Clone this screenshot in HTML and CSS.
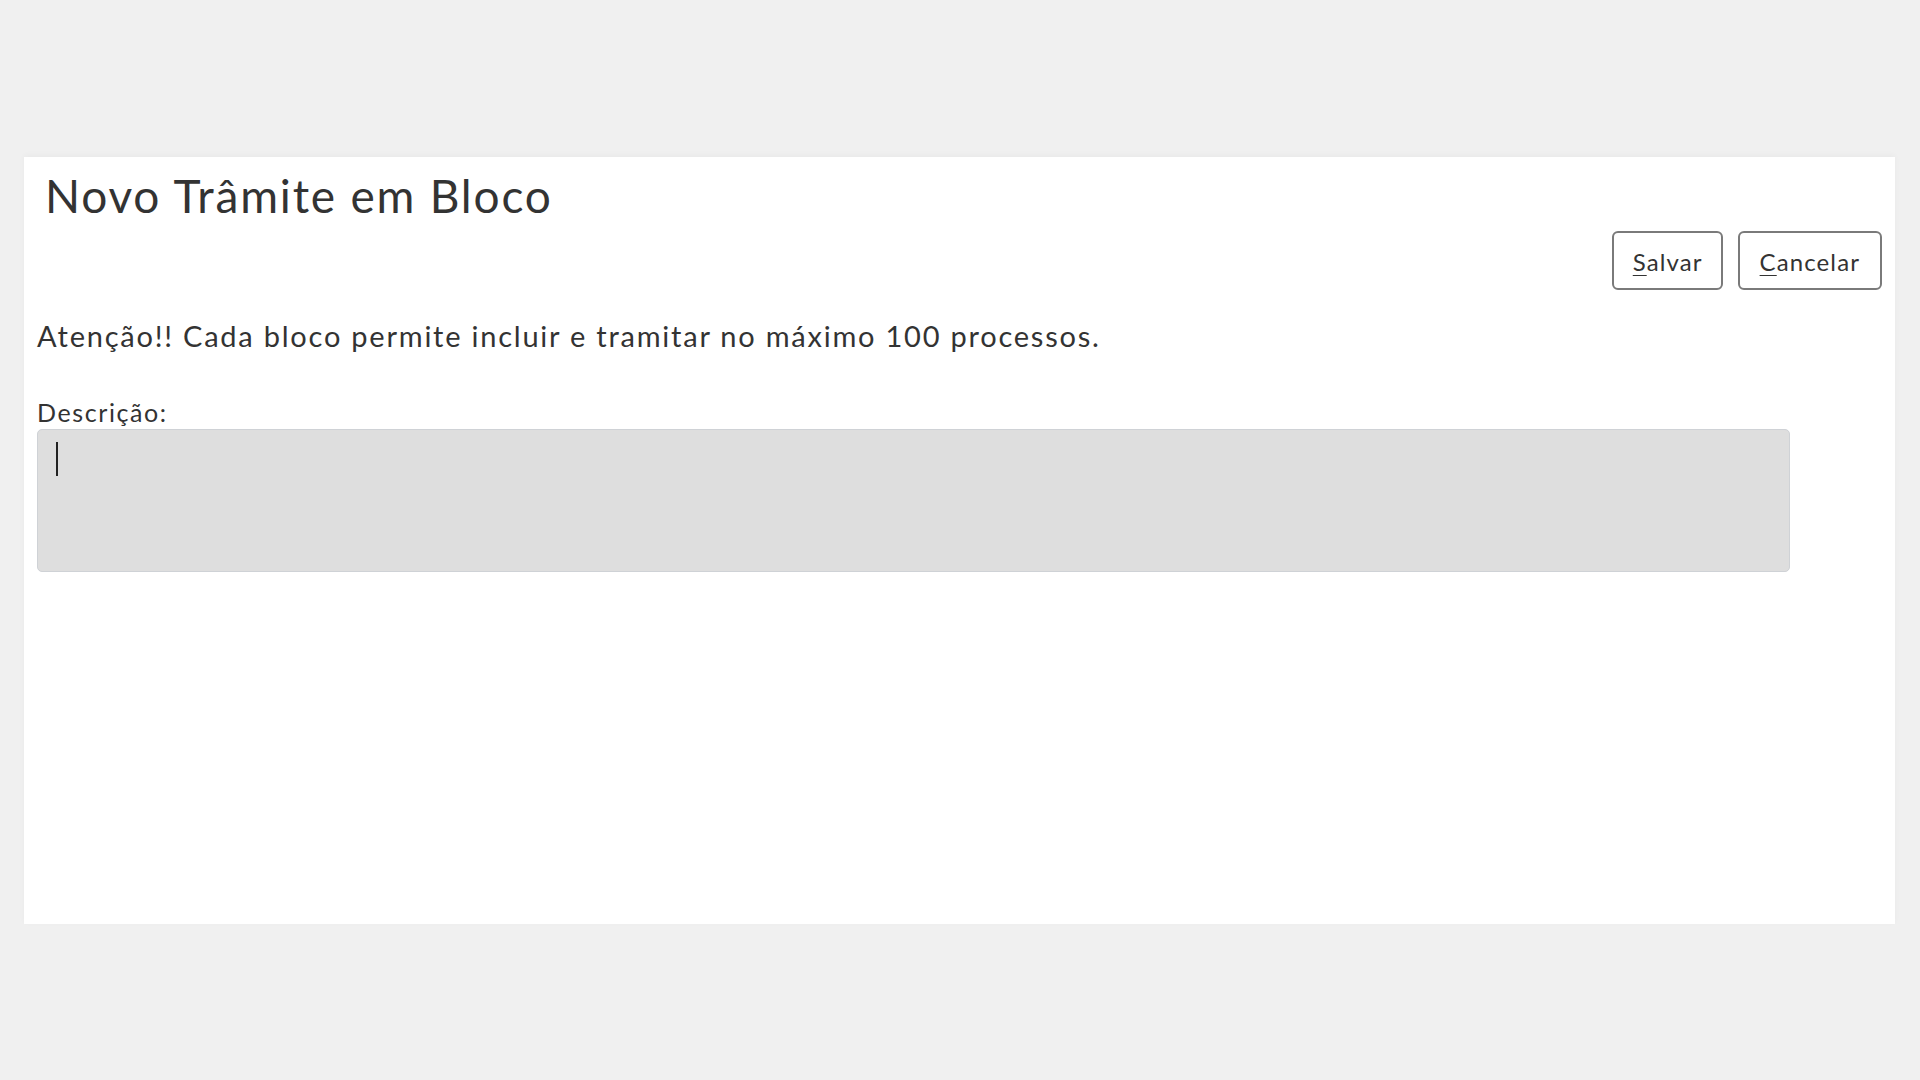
FILE: index.html
```html
<!DOCTYPE html>
<html lang="pt-BR">
<head>
<meta charset="utf-8">
<title>Novo Trâmite em Bloco</title>
<link rel="stylesheet" href="styles.css">
</head>
<body>
<div class="panel">
  <h1 class="title">Novo Trâmite em Bloco</h1>
  <div class="actions">
    <button class="btn" type="button"><u>S</u>alvar</button>
    <button class="btn" type="button"><u>C</u>ancelar</button>
  </div>
  <p class="notice">Atenção!! Cada bloco permite incluir e tramitar no máximo 100 processos.</p>
  <label class="label">Descrição:</label>
  <div class="textarea"><span class="caret"></span></div>
</div>
</body>
</html>
```
FILE: styles.css
```css
html, body {
  margin: 0;
  padding: 0;
}
body {
  background: #f0f0f0;
  font-family: Lato, "Open Sans", sans-serif;
  color: #333;
  width: 1920px;
  height: 1080px;
  padding-top: 157px;
  box-sizing: border-box;
}
.panel {
  margin-left: 24px;
  width: 1871px;
  height: 767px;
  background: #fff;
  box-sizing: border-box;
  padding: 11px 13px 0 13px;
  display: flex;
  flex-direction: column;
  box-shadow: 0 -2px 6px rgba(0,0,0,0.03);
}
.title {
  margin: 0 0 0 8px;
  font-weight: 400;
  font-size: 46px;
  line-height: 55px;
  letter-spacing: 1.8px;
  color: #333;
}
.actions {
  display: flex;
  justify-content: flex-end;
  gap: 15px;
  margin-top: 8px;
}
.btn {
  font-family: inherit;
  font-size: 24px;
  letter-spacing: 1.1px;
  color: #333;
  background: #fff;
  border: 2px solid #7a7a7a;
  border-radius: 6px;
  height: 59px;
  padding: 2px 20px 0 20px;
  line-height: 1;
}
.btn:first-child {
  padding: 2px 18px 0 19px;
}
.btn u {
  text-decoration-thickness: 1px;
  text-underline-offset: 4px;
}
.notice {
  margin: 28px 0 0 0;
  font-size: 29px;
  line-height: 35px;
  letter-spacing: 1.77px;
}
.label {
  margin-top: 44px;
  font-size: 25px;
  line-height: 30px;
  letter-spacing: 1.6px;
}
.textarea {
  margin-top: 2px;
  width: 1753px;
  height: 143px;
  box-sizing: border-box;
  background: #dedede;
  border: 1px solid #cfd2d6;
  border-radius: 5px;
  padding: 12px 18px;
}
.caret {
  display: block;
  width: 2px;
  height: 34px;
  background: #222;
}
```
